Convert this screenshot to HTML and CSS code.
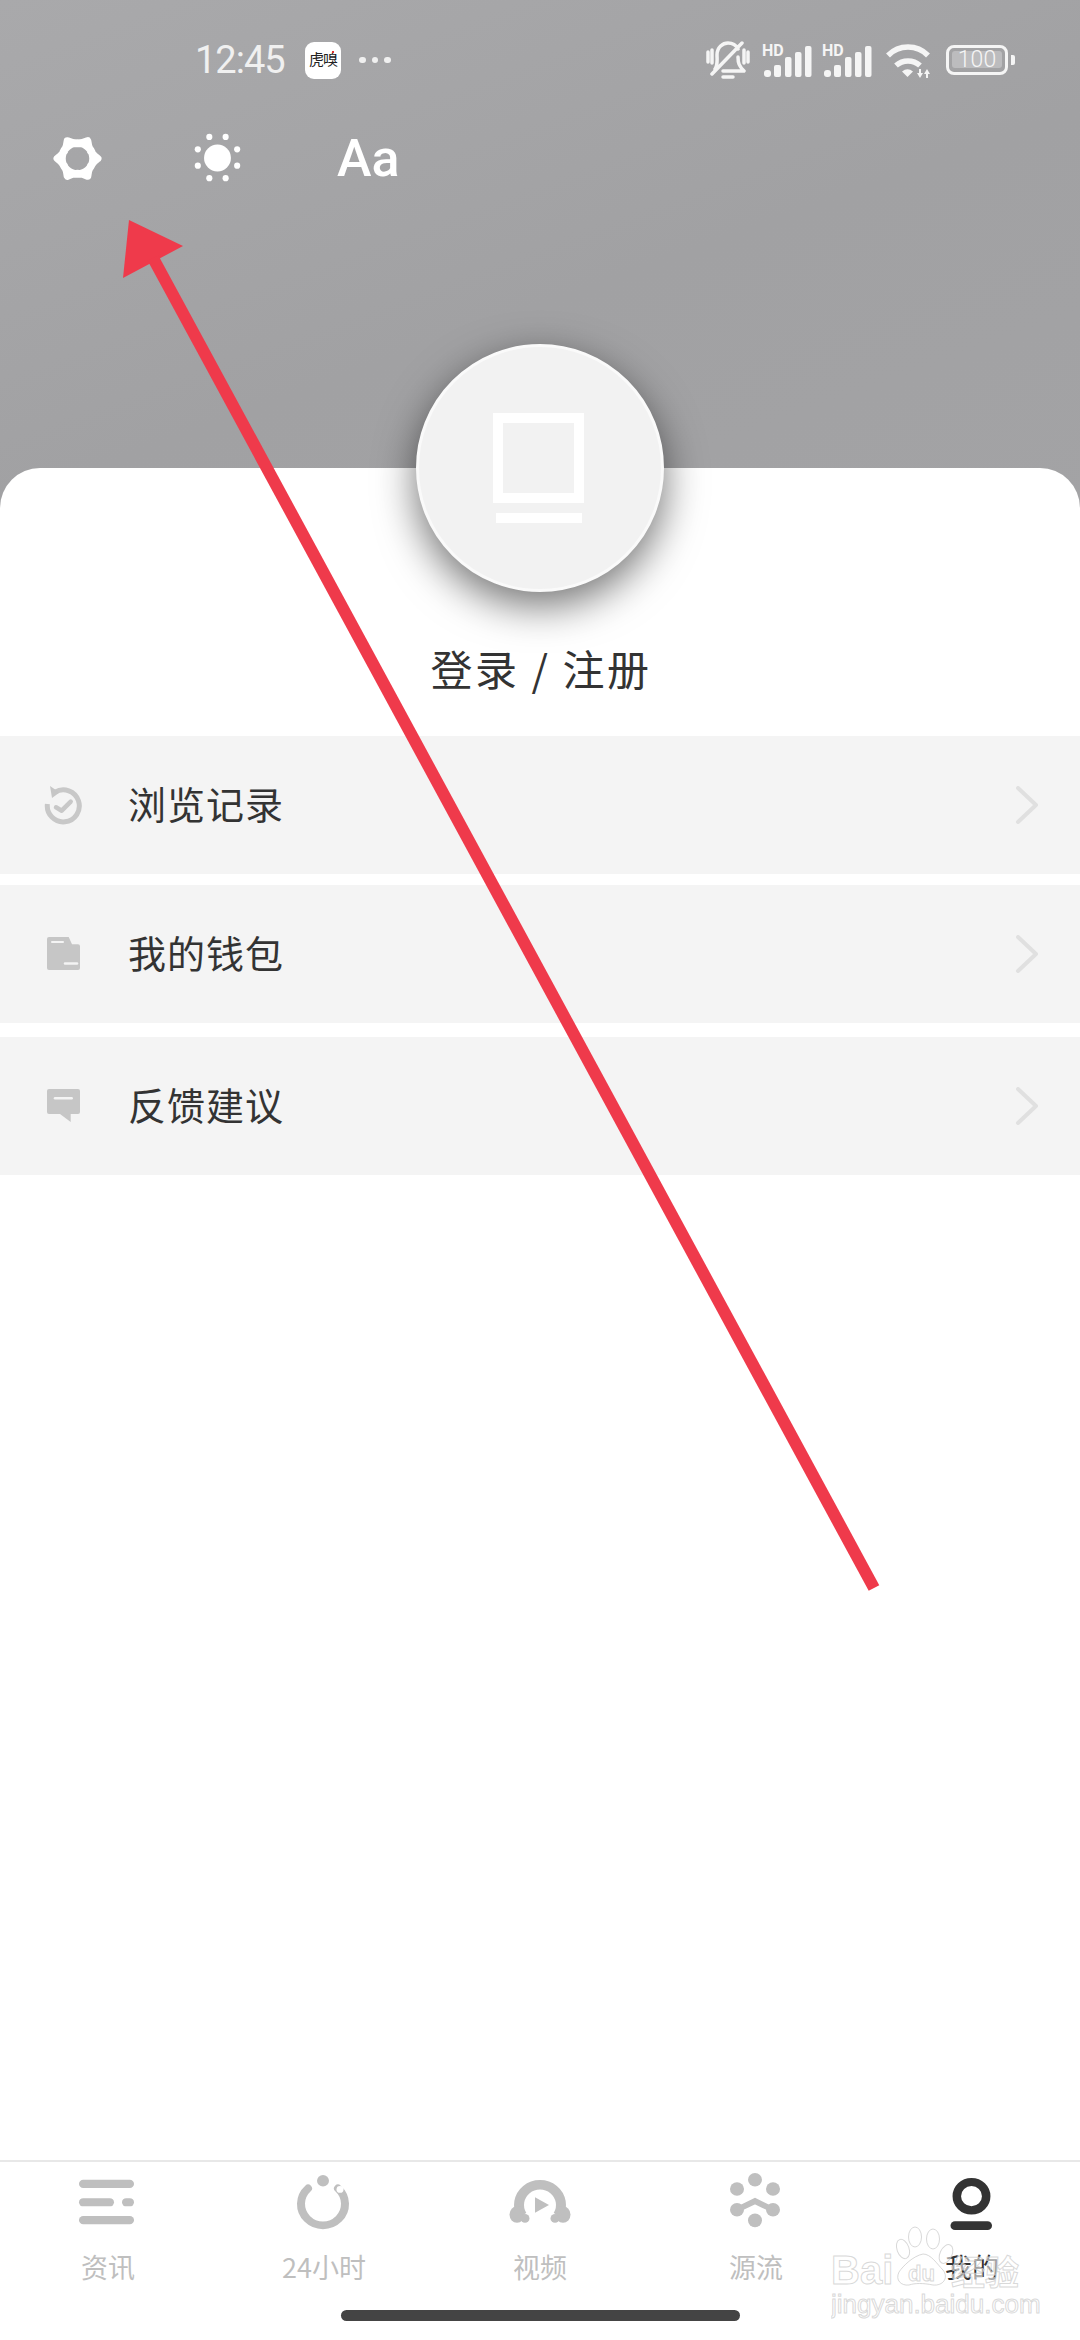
FILE: index.html
```html
<!DOCTYPE html>
<html lang="zh">
<head>
  <meta charset="UTF-8" />
  <meta name="viewport" content="width=device-width, initial-scale=1.0" />
  <title>我的</title>
  <link rel="stylesheet" href="styles.css">
</head>
<body>
  <div class="app">
    <header class="top">
      <div class="status">
        <span class="time">12:45</span>
        <span class="app-badge">虎嗅</span>
        <span class="more"><i></i><i></i><i></i></span>
        <div class="status-right">
          <svg class="bell" width="44" height="38" viewBox="0 0 44 38">
            <path d="M9 28C12 24 11 18 11 14C11 6 17 2 22 2C27 2 30 4 32 8M32 16C32 22 33 25 38 30L17 30M6 33L36 2M2 11v10M42 11v10M6 9v13M38 9v13"/>
            <path d="M17 36h10"/>
          </svg>
          <svg class="signal" width="50" height="34" viewBox="0 -2 50 34">
            <text x="0" y="11">HD</text>
            <rect x="2" y="25" width="7" height="7" rx="3"/>
            <rect x="12" y="20" width="7" height="12" rx="2"/>
            <rect x="23" y="12" width="6.5" height="20" rx="2"/>
            <rect x="33" y="7" width="6.5" height="25" rx="2"/>
            <rect x="43" y="1" width="6.5" height="31" rx="2"/>
          </svg>
          <svg class="signal" width="50" height="34" viewBox="0 -2 50 34">
            <text x="0" y="11">HD</text>
            <rect x="2" y="25" width="7" height="7" rx="3"/>
            <rect x="12" y="20" width="7" height="12" rx="2"/>
            <rect x="23" y="12" width="6.5" height="20" rx="2"/>
            <rect x="33" y="7" width="6.5" height="25" rx="2"/>
            <rect x="43" y="1" width="6.5" height="31" rx="2"/>
          </svg>
          <svg class="wifi" width="46" height="36" viewBox="0 0 46 36">
            <path class="arc" d="M3 13.500A28 28 0 0 1 43 13.500"/>
            <path class="arc" d="M11 23.500A18 18 0 0 1 35 23.500"/>
            <path class="fill" d="M17 29.500Q22.500 25 28 29.500L22.500 35Z"/>
            <path class="fill" d="M32 31h2v-4h2v4h2L35 36ZM39 32h2v4h2v-4h2L42 27Z"/>
          </svg>
          <div class="battery">
            <div class="battery-body"><span>100</span></div>
            <div class="battery-nub"></div>
          </div>
        </div>
      </div>
      <div class="tools">
        <svg class="tool gear-icon" width="47" height="47" viewBox="0 0 50 50">
          <path class="gear" fill-rule="evenodd" d="M46.500 25Q36.700 31.750 35.750 43.600Q25 38.500 14.250 43.600Q13.300 31.750 3.500 25Q13.300 18.250 14.250 6.400Q25 11.500 35.750 6.400Q36.700 18.250 46.500 25ZM41.500 25A16.500 16.500 0 1 0 8.500 25A16.500 16.500 0 1 0 41.500 25Z"/>
        </svg>
        <svg class="tool" width="48" height="48" viewBox="0 0 50 50">
          <circle cx="25.500" cy="25" r="14"/>
          <circle cx="17" cy="3" r="3.200"/><circle cx="34" cy="3" r="3.200"/>
          <circle cx="5" cy="16" r="3.200"/><circle cx="46" cy="16" r="3.200"/>
          <circle cx="5" cy="33" r="3.200"/><circle cx="46" cy="33" r="3.200"/>
          <circle cx="17" cy="46" r="3.200"/><circle cx="34" cy="46" r="3.200"/>
        </svg>
        <span class="font-size">Aa</span>
      </div>
    </header>

    <main class="card">
      <div class="avatar">
        <svg class="avatar-icon" width="92" height="110" viewBox="0 0 92 110">
          <path fill-rule="evenodd" d="M0 0H91V90H0ZM10 10V80H81V10Z"/>
          <rect x="3" y="100" width="86" height="10"/>
        </svg>
      </div>
      <div class="login">登录 / 注册</div>

      <ul class="menu">
        <li class="row">
          <svg class="row-icon" width="40" height="40" viewBox="0 0 40 40">
            <path class="ring" d="M11 7.200A16 16 0 1 1 3.400 19"/>
            <path class="tick" d="M12 22.300L17.700 25.700L26.700 16.700"/>
            <path class="solid" d="M6 1L8 13L15.500 7.500Z"/>
          </svg>
          <span class="row-text">浏览记录</span>
          <svg class="chevron" width="24" height="38" viewBox="0 0 24 38"><path d="M3 2L21 19L3 36"/></svg>
        </li>
        <li class="row">
          <svg class="row-icon" width="40" height="40" viewBox="0 0 40 40">
            <path class="solid" d="M5 3H24.700L28 10.300H34A2 2 0 0 1 36 12.300V34A2 2 0 0 1 34 36H5A2 2 0 0 1 3 34V5A2 2 0 0 1 5 3Z"/>
            <path class="cut-thin" d="M8 8H19"/>
            <path class="cut" d="M21 29.600H33"/>
          </svg>
          <span class="row-text">我的钱包</span>
          <svg class="chevron" width="24" height="38" viewBox="0 0 24 38"><path d="M3 2L21 19L3 36"/></svg>
        </li>
        <li class="row">
          <svg class="row-icon" width="40" height="40" viewBox="0 0 40 40">
            <path class="solid" d="M5 3H34A2 2 0 0 1 36 5V26A2 2 0 0 1 34 28H26.700V36L16 28H5A2 2 0 0 1 3 26V5A2 2 0 0 1 5 3Z"/>
            <path class="cut" d="M11 12.300H27.700"/>
          </svg>
          <span class="row-text">反馈建议</span>
          <svg class="chevron" width="24" height="38" viewBox="0 0 24 38"><path d="M3 2L21 19L3 36"/></svg>
        </li>
      </ul>
    </main>

    <footer class="tabbar">
      <nav class="tabs">
        <div class="tab">
          <svg width="64" height="58" viewBox="0 0 64 60" preserveAspectRatio="none">
            <rect x="3" y="7" width="55" height="8.500" rx="4.200"/>
            <rect x="3" y="26" width="35" height="8.500" rx="4.200"/>
            <rect x="46" y="26" width="12" height="8.500" rx="4.200"/>
            <rect x="3" y="44.500" width="55" height="8.500" rx="4.200"/>
          </svg>
          <span>资讯</span>
        </div>
        <div class="tab">
          <svg width="64" height="58" viewBox="0 0 64 60" preserveAspectRatio="none">
            <path class="tab-stroke" d="M16 16A22 22 0 1 0 46 16"/>
            <circle cx="31" cy="8" r="6"/>
            <circle class="tab-hole" cx="48" cy="17" r="3.500"/>
          </svg>
          <span>24小时</span>
        </div>
        <div class="tab">
          <svg width="64" height="58" viewBox="0 0 64 60" preserveAspectRatio="none">
            <path class="tab-stroke butt" d="M14 44A21 21 0 1 1 50 44"/>
            <ellipse cx="9" cy="43" rx="7.500" ry="8.500"/>
            <circle cx="17" cy="47" r="4.500"/>
            <ellipse cx="55" cy="43" rx="7.500" ry="8.500"/>
            <circle cx="47" cy="47" r="4.500"/>
            <path d="M27 25L41 33L27 41Z"/>
          </svg>
          <span>视频</span>
        </div>
        <div class="tab">
          <svg width="64" height="58" viewBox="0 0 64 60" preserveAspectRatio="none">
            <circle cx="31" cy="7" r="7"/>
            <circle cx="13" cy="16.600" r="7"/><circle cx="49" cy="16.600" r="7"/>
            <circle cx="13" cy="38" r="7"/><circle cx="49" cy="38" r="7"/>
            <circle cx="31" cy="49" r="7"/>
            <path class="tab-stroke thin" d="M13 38L31 29L49 38"/>
          </svg>
          <span>源流</span>
        </div>
        <div class="tab active">
          <svg width="64" height="58" viewBox="0 0 64 60" preserveAspectRatio="none">
            <circle class="tab-stroke me" cx="31.500" cy="24" r="14.700"/>
            <rect x="10.500" y="50" width="41.500" height="9" rx="4.500"/>
          </svg>
          <span>我的</span>
        </div>
      </nav>
      <div class="home-bar"></div>
    </footer>

    <!-- annotation drawn over the screenshot -->
    <svg class="arrow" width="1080" height="2340" viewBox="0 0 1080 2340">
      <path d="M129 220L183 246L123 278Z"/>
      <path d="M153 258L874 1588" class="arrow-line"/>
    </svg>

    <!-- site watermark -->
    <svg class="watermark" width="210" height="100" viewBox="0 0 210 100">
      <text class="wm-big" x="0" y="62">Bai</text>
      <ellipse cx="72" cy="27" rx="6" ry="10" transform="rotate(-20 72 27)"/>
      <ellipse cx="84" cy="15" rx="6.500" ry="10"/>
      <ellipse cx="102" cy="17" rx="6.500" ry="10"/>
      <ellipse cx="115" cy="32" rx="6" ry="10" transform="rotate(25 115 32)"/>
      <path d="M68 50C72 44 82 34 92 32C100 32 106 42 112 48C118 56 112 64 102 63C92 61 84 61 78 63C70 64 64 58 68 50Z"/>
      <text class="wm-du" x="77" y="59">du</text>
      <text class="wm-cn" x="120" y="63">经验</text>
      <text class="wm-url" x="0" y="91">jingyan.baidu.com</text>
    </svg>
  </div>
</body>
</html>
```

FILE: styles.css
```css
* {
  margin: 0;
  padding: 0;
  box-sizing: border-box;
}
body {
  font-family: Roboto, "Noto Sans CJK SC", sans-serif;
  background: #fff;
}
.app {
  position: relative;
  width: 1080px;
  height: 2340px;
  display: flex;
  flex-direction: column;
  overflow: hidden;
}

/* Grey header */
.top {
  height: 520px;
  margin-bottom: -52px;
  background: linear-gradient(160deg, #a9a9ab 0%, #a1a1a3 55%, #a3a3a5 100%);
}
.status {
  height: 120px;
  padding-left: 195px;
  display: flex;
  align-items: center;
  color: #f0f0f0;
}
.time {
  font-size: 38px;
  letter-spacing: -1px;
  width: 110px;
}
.app-badge {
  position: relative;
  width: 36px;
  height: 37px;
  border-radius: 9px;
  background: #fff;
  color: #222;
  font-size: 15px;
  line-height: 37px;
  text-align: center;
  letter-spacing: -1px;
  white-space: nowrap;
}
.app-badge::after {
  content: "";
  position: absolute;
  left: 27px;
  top: 9px;
  width: 2px;
  height: 2px;
  background: #d33;
}
.more {
  display: flex;
  gap: 6px;
  margin-left: 18px;
}
.more i {
  width: 6.5px;
  height: 6.5px;
  border-radius: 50%;
  background: #f0f0f0;
}
.status-right {
  margin-left: auto;
  padding-right: 65px;
  display: flex;
  align-items: center;
}
.bell {
  margin-right: 12px;
}
.bell path {
  fill: none;
  stroke: #f5f5f5;
  stroke-width: 3.5;
  stroke-linecap: round;
  stroke-linejoin: round;
}
.signal {
  margin-right: 10px;
  fill: #f5f5f5;
  overflow: visible;
}
.signal text {
  font-family: Roboto, sans-serif;
  font-size: 16px;
  font-weight: 700;
}
.signal + .wifi {
  margin-left: 3px;
}
.wifi {
  margin-right: 15px;
}
.wifi .arc {
  fill: none;
  stroke: #f5f5f5;
  stroke-width: 5.5;
}
.wifi .fill {
  fill: #f5f5f5;
}
.battery {
  display: flex;
  align-items: center;
  gap: 3px;
}
.battery-body {
  width: 62px;
  height: 30px;
  border: 3.5px solid #f5f5f5;
  border-radius: 8px;
  padding: 3px;
}
.battery-body span {
  display: block;
  height: 17px;
  border-radius: 3px;
  background: #bcbcbe;
  color: #f5f5f5;
  font-size: 23px;
  font-weight: 300;
  line-height: 17px;
  text-align: center;
}
.battery-nub {
  width: 4px;
  height: 10px;
  border-radius: 0 2px 2px 0;
  background: #f5f5f5;
}
.tools {
  height: 76px;
  padding-left: 54px;
  display: flex;
  align-items: center;
  gap: 92px;
  color: #fff;
}
.tool {
  fill: #fff;
  overflow: visible;
}
.gear {
  stroke: #fff;
  stroke-width: 8;
  stroke-linejoin: round;
}
.font-size {
  margin-left: 4px;
  font-size: 52px;
  font-weight: 500;
}

/* White card */
.card {
  flex: 1;
  background: #fff;
  border-radius: 40px 40px 0 0;
  display: flex;
  flex-direction: column;
  align-items: center;
  position: relative;
}
.avatar {
  width: 248px;
  height: 248px;
  margin-top: -124px;
  border: 3px solid #fafafa;
  border-radius: 50%;
  background: #f2f2f2;
  box-shadow: 0 14px 40px rgba(0, 0, 0, 0.55);
  display: flex;
  justify-content: center;
  align-items: center;
}
.avatar-icon {
  fill: #fff;
  margin-right: 3px;
}
.login {
  margin-top: 46px;
  height: 60px;
  padding-left: 2px;
  font-family: "Noto Sans CJK SC", sans-serif;
  font-size: 42px;
  letter-spacing: 2.5px;
  line-height: 60px;
  color: #333;
}
.menu {
  list-style: none;
  width: 100%;
  margin-top: 38px;
}
.row {
  height: 138px;
  padding: 0 44px;
  background: #f4f4f4;
  display: flex;
  align-items: center;
}
.row:nth-child(2) {
  margin-top: 11px;
}
.row:nth-child(3) {
  margin-top: 14px;
}
.row-icon {
  margin-right: 44px;
}
.row-text {
  padding-bottom: 6px;
  font-family: "Noto Sans CJK SC", sans-serif;
  font-size: 38px;
  letter-spacing: 1px;
  color: #333;
}
.chevron {
  margin-left: auto;
  margin-right: -3px;
}
.chevron path {
  fill: none;
  stroke: #e0e0e0;
  stroke-width: 4;
  stroke-linecap: round;
  stroke-linejoin: round;
}
.row-icon .solid {
  fill: #c6c6c6;
}
.row-icon .ring {
  fill: none;
  stroke: #c8c8c8;
  stroke-width: 5;
}
.row-icon .tick {
  fill: none;
  stroke: #c8c8c8;
  stroke-width: 4.5;
  stroke-linecap: round;
  stroke-linejoin: round;
}
.row-icon .cut,
.row-icon .cut-thin {
  fill: none;
  stroke: #f4f4f4;
  stroke-width: 2.5;
  stroke-linecap: round;
}
.row-icon .cut-thin {
  stroke-width: 2;
}

/* Bottom tabs */
.tabbar {
  height: 180px;
  border-top: 2px solid #e8e8e8;
  background: #fff;
  position: relative;
}
.tabs {
  display: grid;
  grid-template-columns: repeat(5, 216px);
  padding-top: 11px;
}
.tab {
  display: flex;
  flex-direction: column;
  align-items: center;
  fill: #bfbfbf;
  color: #bfbfbf;
  font-family: "Noto Sans CJK SC", sans-serif;
  font-size: 27px;
}
.tab span {
  margin-top: 18px;
  height: 36px;
  line-height: 36px;
}
.tab.active {
  fill: #333;
  color: #333;
}
.tab-stroke {
  fill: none;
  stroke: #bfbfbf;
  stroke-width: 8;
  stroke-linecap: round;
}
.tab-stroke.butt {
  stroke-width: 10;
  stroke-linecap: butt;
}
.tab-stroke.thin {
  stroke-width: 6;
  stroke-linecap: butt;
}
.tab-stroke.me {
  stroke: #333;
  stroke-width: 8.5;
}
.tab-hole {
  fill: #fff;
}
.home-bar {
  width: 399px;
  height: 11px;
  margin: 25px auto 0;
  border-radius: 6px;
  background: #444;
}

/* Overlays */
.arrow {
  position: absolute;
  left: 0;
  top: 0;
  pointer-events: none;
}
.arrow path {
  fill: #ef3a4b;
}
.arrow .arrow-line {
  fill: none;
  stroke: #ef3a4b;
  stroke-width: 12;
}
.watermark {
  position: absolute;
  left: 831px;
  top: 2222px;
  pointer-events: none;
  fill: rgba(255, 255, 255, 0.55);
  stroke: rgba(200, 200, 200, 0.7);
  stroke-width: 1;
}
.watermark text {
  font-family: "Liberation Sans", sans-serif;
}
.wm-big {
  font-size: 40px;
  font-weight: 700;
}
.wm-du {
  font-size: 22px;
  font-weight: 700;
}
.watermark .wm-cn {
  font-family: "Noto Sans CJK SC", sans-serif;
  font-size: 34px;
  font-weight: 700;
}
.wm-url {
  font-size: 26px;
}
```
